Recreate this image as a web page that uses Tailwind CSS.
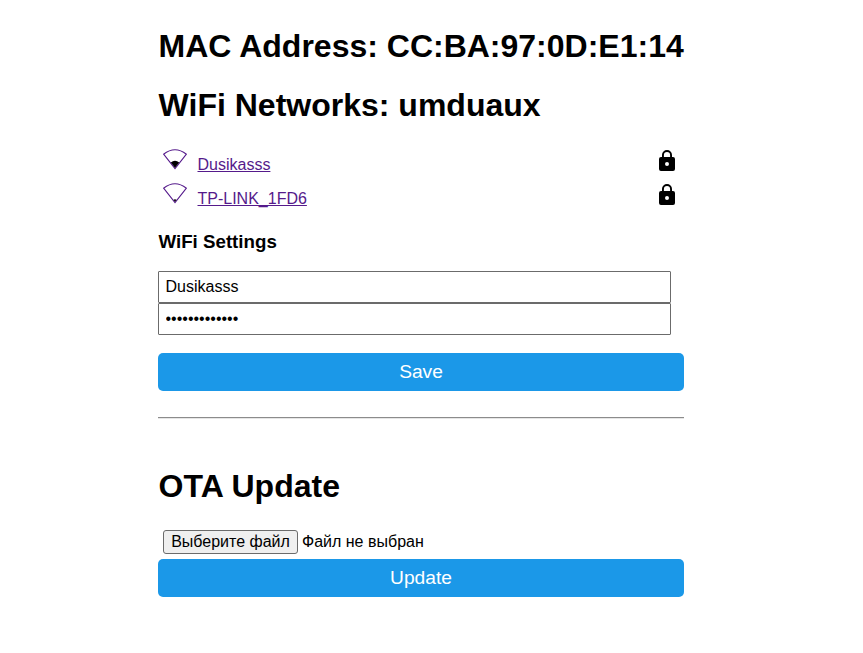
<!DOCTYPE html>
<html lang="ru">
<head>
<meta charset="utf-8">
<title>WiFi</title>
<script src="https://cdn.jsdelivr.net/npm/@tailwindcss/browser@4"></script>
</head>
<body class="bg-white text-black text-base font-['Liberation_Sans',Arial,sans-serif]">
<main class="ml-[158px] w-[526px] pt-[28px] flex flex-col">
  <h1 class="pl-[0.6px] text-[32px] leading-[37px] font-bold whitespace-nowrap">MAC Address: CC:BA:97:0D:E1:14</h1>
  <h1 class="mt-[22px] pl-[0.6px] text-[32px] leading-[37px] font-bold whitespace-nowrap">WiFi Networks: umduaux</h1>
  <div class="mt-[24px] flex h-[34px] items-start justify-between pl-[5px] pr-[9px]">
    <div class="flex">
      <svg class="w-6 h-6 mt-[1px] mr-[10.5px]" viewBox="0 0 24 24"><path d="M.6 5.200Q12-3.600 23.400 5.200L12 19.500Z" fill="none" stroke="#551a8b" stroke-width="1.100"/><path d="M7.800 13.500Q12 10.200 16.200 13.500L12 18.700Z" fill="#000"/></svg>
      <a class="mt-[8px] leading-[18px] text-[#551a8b] underline underline-offset-1 [text-decoration-skip-ink:none]" href="#">Dusikasss</a>
    </div>
    <svg class="w-4 h-[22px] mt-[2px]" viewBox="0 0 16 22"><path fill-rule="evenodd" d="M14 7H13V5A5 5 0 0 0 3 5V7H2A2 2 0 0 0 0 9V19A2 2 0 0 0 2 21H14A2 2 0 0 0 16 19V9A2 2 0 0 0 14 7ZM4.900 7V5A3.100 3.100 0 0 1 11.100 5V7ZM8 12A2 2 0 1 1 8 16A2 2 0 1 1 8 12Z"/></svg>
  </div>
  <div class="flex h-[34px] items-start justify-between pl-[5px] pr-[9px]">
    <div class="flex">
      <svg class="w-6 h-6 mt-[1px] mr-[10.5px]" viewBox="0 0 24 24"><path d="M.6 5.200Q12-3.600 23.400 5.200L12 19.500Z" fill="none" stroke="#551a8b" stroke-width="1.100"/><path d="M10.500 16.800Q12 15.700 13.500 16.800L12 18.700Z" fill="#000"/></svg>
      <a class="mt-[8px] leading-[18px] text-[#551a8b] underline underline-offset-1 [text-decoration-skip-ink:none]" href="#">TP-LINK_1FD6</a>
    </div>
    <svg class="w-4 h-[22px] mt-[2px]" viewBox="0 0 16 22"><path fill-rule="evenodd" d="M14 7H13V5A5 5 0 0 0 3 5V7H2A2 2 0 0 0 0 9V19A2 2 0 0 0 2 21H14A2 2 0 0 0 16 19V9A2 2 0 0 0 14 7ZM4.900 7V5A3.100 3.100 0 0 1 11.100 5V7ZM8 12A2 2 0 1 1 8 16A2 2 0 1 1 8 12Z"/></svg>
  </div>
  <h3 class="mt-[15px] pl-[0.5px] text-[18.72px] leading-[22px] font-bold">WiFi Settings</h3>
  <input class="mt-[18px] w-[513px] h-[32px] border border-[#6b6b6b] rounded-[1px] pl-[6.5px] pr-[6px] text-base" type="text" value="Dusikasss">
  <input class="w-[513px] h-[32px] border border-[#6b6b6b] rounded-[1px] pl-[6.5px] pr-[6px] pb-[1px] text-base" type="password" value="abcdefghijklm">
  <button class="mt-[18px] h-[38px] rounded-[5px] bg-[#1b98e8] text-white text-[19.2px] leading-[22px]">Save</button>
  <div class="mt-[26px] h-[2px] border-t border-t-[#8c8c8c] border-b border-b-[#e6e6e6]"></div>
  <h1 class="mt-[49px] pl-[0.6px] text-[32px] leading-[37px] font-bold">OTA Update</h1>
  <div class="mt-[25px] ml-[5px] h-[24px] flex items-center">
    <button class="w-[135px] h-[24px] border border-[#6b6b6b] rounded-[3px] bg-[#efefef] text-base leading-[22px] whitespace-nowrap">Выберите файл</button>
    <span class="ml-[4px] leading-[24px]">Файл не выбран</span>
  </div>
  <button class="mt-[5px] h-[38px] rounded-[5px] bg-[#1b98e8] text-white text-[19.2px] leading-[22px]">Update</button>
</main>
</body>
</html>
